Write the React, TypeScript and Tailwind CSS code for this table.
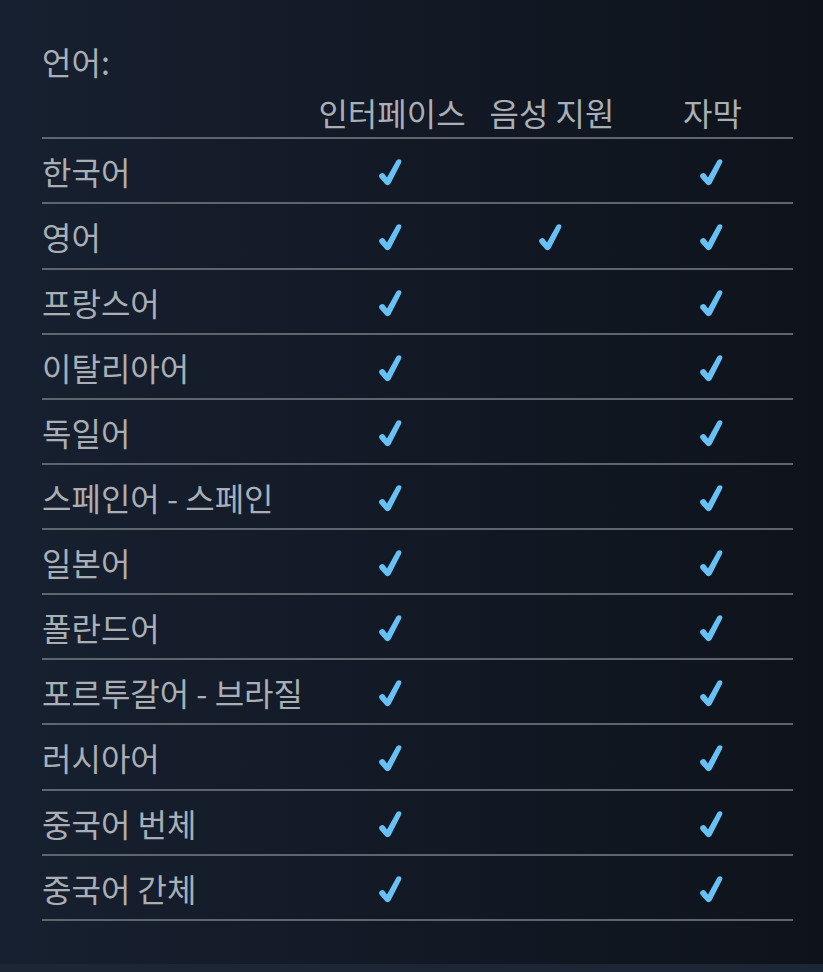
const rows: { name: string; ui: boolean; voice: boolean; subs: boolean; h: string }[] = [
  { name: "한국어", ui: true, voice: false, subs: true, h: "h-[65px]" },
  { name: "영어", ui: true, voice: true, subs: true, h: "h-[66px]" },
  { name: "프랑스어", ui: true, voice: false, subs: true, h: "h-[65px]" },
  { name: "이탈리아어", ui: true, voice: false, subs: true, h: "h-[65px]" },
  { name: "독일어", ui: true, voice: false, subs: true, h: "h-[65px]" },
  { name: "스페인어 - 스페인", ui: true, voice: false, subs: true, h: "h-[65px]" },
  { name: "일본어", ui: true, voice: false, subs: true, h: "h-[65px]" },
  { name: "폴란드어", ui: true, voice: false, subs: true, h: "h-[65px]" },
  { name: "포르투갈어 - 브라질", ui: true, voice: false, subs: true, h: "h-[65px]" },
  { name: "러시아어", ui: true, voice: false, subs: true, h: "h-[66px]" },
  { name: "중국어 번체", ui: true, voice: false, subs: true, h: "h-[65px]" },
  { name: "중국어 간체", ui: true, voice: false, subs: true, h: "h-[65px]" },
];

function Check() {
  return (
    <svg width="24" height="28" viewBox="0 0 24 28" className="block">
      <path
        d="M1.5 16.5 Q3.5 14 6 15.5 L9 19.5 L18.5 2.5 Q20.5 0.5 22.8 1.8 Q24 3 23 5 L12.5 25.5 Q10.5 28 8 26.8 Q7 26.2 6.5 25.3 L1.5 19.5 Q0.5 18 1.5 16.5 Z"
        fill="#67c1f5"
      />
    </svg>
  );
}

function Cell({ on }: { on: boolean }) {
  return <div className="flex items-center justify-center pr-[4px] pt-[2px]">{on ? <Check /> : null}</div>;
}

export default function App() {
  return (
    <div
      className="flex h-[972px] w-[823px] flex-col bg-gradient-to-r from-[#172030] to-[#0e131b] text-[#a9afb5]"
      style={{ fontFamily: '"Noto Sans CJK KR", "Noto Sans", sans-serif' }}
    >
      <div className="flex-1 px-[42px] pt-[39px]">
        <div className="text-[32px] leading-[45px]">언어:</div>
        <div className="grid w-[751px] grid-cols-[270px_160px_160px_161px]">
          <div className="h-[55px] border-b-2 border-[#5f656d]" />
          {["인터페이스", "음성 지원", "자막"].map((h) => (
            <div
              key={h}
              className="flex h-[55px] items-end justify-center border-b-2 border-[#5f656d] pb-[4px] text-[32px] leading-[42px]"
            >
              {h}
            </div>
          ))}
          {rows.map((r) => (
            <div key={r.name} className="contents">
              <div className={`flex ${r.h} items-center border-b-2 border-[#5f656d] text-[32px] leading-none`}>
                {r.name}
              </div>
              <div className={`grid ${r.h} border-b-2 border-[#5f656d]`}>
                <Cell on={r.ui} />
              </div>
              <div className={`grid ${r.h} border-b-2 border-[#5f656d]`}>
                <Cell on={r.voice} />
              </div>
              <div className={`grid ${r.h} border-b-2 border-[#5f656d]`}>
                <Cell on={r.subs} />
              </div>
            </div>
          ))}
        </div>
      </div>
      <div className="h-[8px] bg-[#1c2635]" />
    </div>
  );
}
